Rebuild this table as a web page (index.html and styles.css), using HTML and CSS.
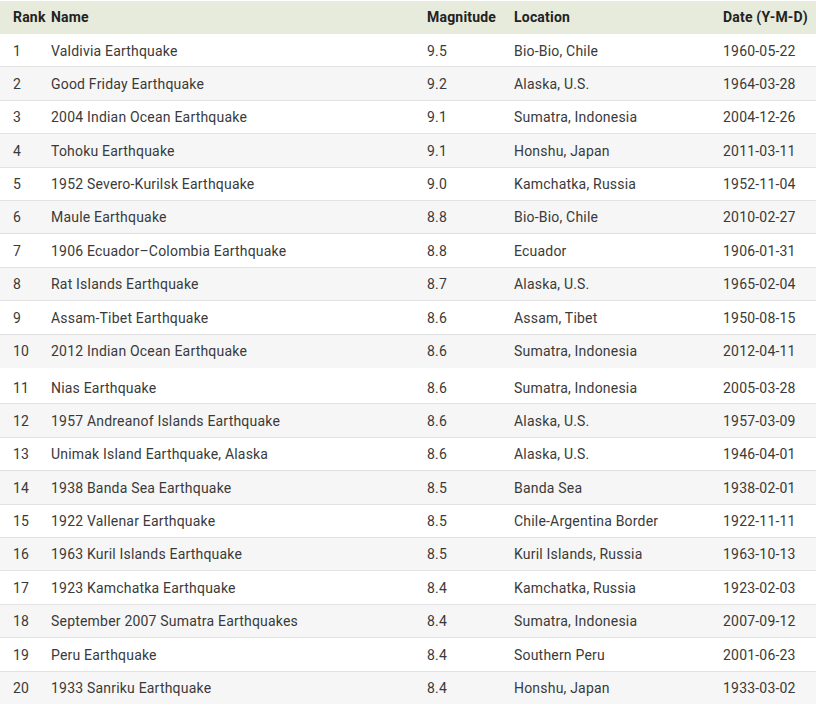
FILE: index.html
```html
<!DOCTYPE html>
<html>
<head>
<meta charset="utf-8">
<link rel="stylesheet" href="styles.css">
</head>
<body>
<table class="quakes">
  <colgroup>
    <col class="c-rank"><col class="c-name"><col class="c-mag"><col class="c-loc"><col class="c-date">
  </colgroup>
  <thead>
    <tr><th>Rank</th><th>Name</th><th>Magnitude</th><th>Location</th><th>Date (Y-M-D)</th></tr>
  </thead>
  <tbody>
    <tr><td>1</td><td>Valdivia Earthquake</td><td>9.5</td><td>Bio-Bio, Chile</td><td>1960-05-22</td></tr>
    <tr><td>2</td><td>Good Friday Earthquake</td><td>9.2</td><td>Alaska, U.S.</td><td>1964-03-28</td></tr>
    <tr><td>3</td><td>2004 Indian Ocean Earthquake</td><td>9.1</td><td>Sumatra, Indonesia</td><td>2004-12-26</td></tr>
    <tr><td>4</td><td>Tohoku Earthquake</td><td>9.1</td><td>Honshu, Japan</td><td>2011-03-11</td></tr>
    <tr><td>5</td><td>1952 Severo-Kurilsk Earthquake</td><td>9.0</td><td>Kamchatka, Russia</td><td>1952-11-04</td></tr>
    <tr><td>6</td><td>Maule Earthquake</td><td>8.8</td><td>Bio-Bio, Chile</td><td>2010-02-27</td></tr>
    <tr><td>7</td><td>1906 Ecuador–Colombia Earthquake</td><td>8.8</td><td>Ecuador</td><td>1906-01-31</td></tr>
    <tr><td>8</td><td>Rat Islands Earthquake</td><td>8.7</td><td>Alaska, U.S.</td><td>1965-02-04</td></tr>
    <tr><td>9</td><td>Assam-Tibet Earthquake</td><td>8.6</td><td>Assam, Tibet</td><td>1950-08-15</td></tr>
    <tr class="no-border"><td>10</td><td>2012 Indian Ocean Earthquake</td><td>8.6</td><td>Sumatra, Indonesia</td><td>2012-04-11</td></tr>
    <tr class="tall"><td>11</td><td>Nias Earthquake</td><td>8.6</td><td>Sumatra, Indonesia</td><td>2005-03-28</td></tr>
    <tr><td>12</td><td>1957 Andreanof Islands Earthquake</td><td>8.6</td><td>Alaska, U.S.</td><td>1957-03-09</td></tr>
    <tr><td>13</td><td>Unimak Island Earthquake, Alaska</td><td>8.6</td><td>Alaska, U.S.</td><td>1946-04-01</td></tr>
    <tr><td>14</td><td>1938 Banda Sea Earthquake</td><td>8.5</td><td>Banda Sea</td><td>1938-02-01</td></tr>
    <tr><td>15</td><td>1922 Vallenar Earthquake</td><td>8.5</td><td>Chile-Argentina Border</td><td>1922-11-11</td></tr>
    <tr><td>16</td><td>1963 Kuril Islands Earthquake</td><td>8.5</td><td>Kuril Islands, Russia</td><td>1963-10-13</td></tr>
    <tr><td>17</td><td>1923 Kamchatka Earthquake</td><td>8.4</td><td>Kamchatka, Russia</td><td>1923-02-03</td></tr>
    <tr><td>18</td><td>September 2007 Sumatra Earthquakes</td><td>8.4</td><td>Sumatra, Indonesia</td><td>2007-09-12</td></tr>
    <tr><td>19</td><td>Peru Earthquake</td><td>8.4</td><td>Southern Peru</td><td>2001-06-23</td></tr>
    <tr><td>20</td><td>1933 Sanriku Earthquake</td><td>8.4</td><td>Honshu, Japan</td><td>1933-03-02</td></tr>
  </tbody>
</table>
</body>
</html>
```
FILE: styles.css
```css
html, body {
  margin: 0;
  padding: 0;
  background: #ffffff;
}

.quakes {
  margin-top: 1px;
  width: 816px;
  border-collapse: collapse;
  table-layout: fixed;
  font-family: Roboto, "Liberation Sans", sans-serif;
  font-size: 14px;
  line-height: 20px;
  letter-spacing: 0.2px;
  color: #3a3a3a;
}

.c-rank { width: 51px; }
.c-name { width: 376px; }
.c-mag { width: 87px; }
.c-loc { width: 209px; }
.c-date { width: 93px; }

.quakes th,
.quakes td {
  padding: 0;
  text-align: left;
  vertical-align: middle;
  white-space: nowrap;
}

.quakes th:first-child,
.quakes td:first-child {
  padding-left: 13px;
}

.quakes thead th {
  background: #e6ebdb;
  color: #222222;
  font-weight: 700;
  padding-top: 6px;
  padding-bottom: 7px;
}

.quakes tbody td {
  padding-top: 6.5px;
  padding-bottom: 5.9px;
  border-bottom: 1px solid #e2e2e2;
}

.quakes tbody tr:nth-child(even) td {
  background: #f6f6f6;
}

.quakes tbody tr.no-border td {
  border-bottom-color: #f6f6f6;
}

.quakes tbody tr.tall td {
  padding-top: 10px;
  padding-bottom: 5.5px;
}

.quakes tbody tr:last-child td {
  border-bottom: none;
}
```
